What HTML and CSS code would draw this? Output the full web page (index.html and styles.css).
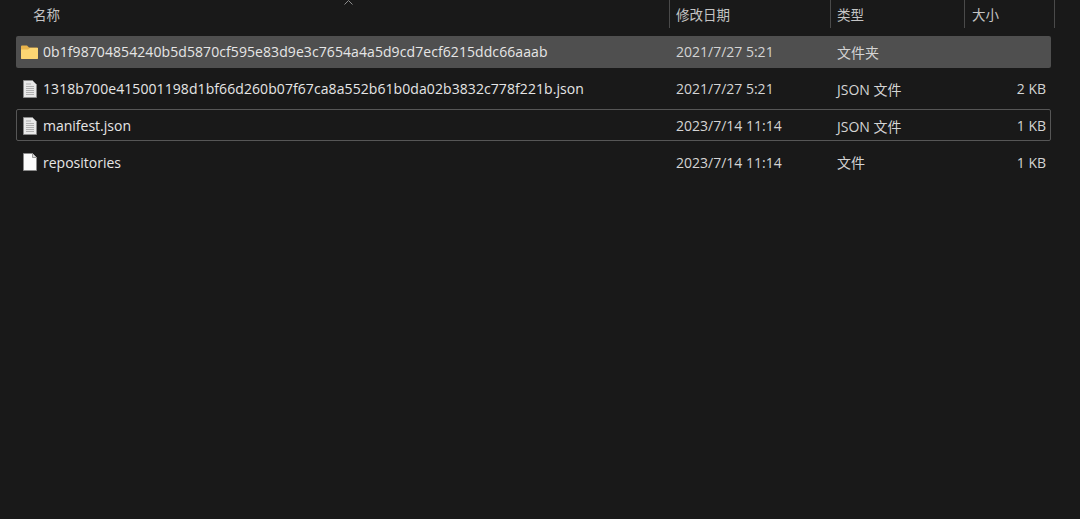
FILE: index.html
```html
<!DOCTYPE html>
<html lang="en">
<head>
    <meta charset="UTF-8">
    <meta name="viewport" content="width=device-width, initial-scale=1.0">
    <title>File list</title>
    <link rel="stylesheet" href="styles.css">
</head>
<body>
    <svg class="icon-defs" width="0" height="0">
        <symbol id="doc-lines" viewBox="0 0 14 18">
            <path d="M.5.5h9l4 4v13H.5z" fill="#e8e8e8" stroke="#8a8a8a"/>
            <path d="M3 4h5M3 6.500h8M3 8.500h8M3 10.500h8M3 12.500h8M3 14.500h8" stroke="#b0b0b0"/>
        </symbol>
        <symbol id="doc-blank" viewBox="0 0 14 18">
            <path d="M.5.5h9l4 4v13H.5z" fill="#fbfbfb" stroke="#8a8a8a"/>
            <path d="M9.500.5v4h4" fill="#d8d8d8" stroke="#9a9a9a"/>
        </symbol>
        <symbol id="folder" viewBox="0 0 17 14">
            <path d="M0 1.500Q0 .5 1 .5h5l2 2h8q1 0 1 1V13q0 1-1 1H1q-1 0-1-1z" fill="#e9b44c"/>
            <path d="M0 4.500h7l2-1.500h8v10q0 1-1 1H1q-1 0-1-1z" fill="#fcd673"/>
        </symbol>
    </svg>

    <div class="explorer">
        <div class="header">
            <div class="col-name head-cell">名称</div>
            <div class="col-date head-cell">修改日期</div>
            <div class="col-type head-cell">类型</div>
            <div class="col-size head-cell">大小</div>
            <svg class="sort-caret" width="9" height="5" viewBox="0 0 9 5"><path d="M.5 4.500l4-4 4 4" fill="none" stroke="#8c8c8c"/></svg>
        </div>

        <div class="rows">
            <div class="row selected">
                <div class="col-name name-cell">
                    <svg class="icon icon-folder"><use href="#folder"/></svg>
                    <span class="filename hash">0b1f98704854240b5d5870cf595e83d9e3c7654a4a5d9cd7ecf6215ddc66aaab</span>
                </div>
                <div class="col-date">2021/7/27 5:21</div>
                <div class="col-type">文件夹</div>
                <div class="col-size"></div>
            </div>
            <div class="row">
                <div class="col-name name-cell">
                    <svg class="icon"><use href="#doc-lines"/></svg>
                    <span class="filename hash">1318b700e415001198d1bf66d260b07f67ca8a552b61b0da02b3832c778f221b.json</span>
                </div>
                <div class="col-date">2021/7/27 5:21</div>
                <div class="col-type">JSON 文件</div>
                <div class="col-size">2 KB</div>
            </div>
            <div class="row focused">
                <div class="col-name name-cell">
                    <svg class="icon"><use href="#doc-lines"/></svg>
                    <span class="filename">manifest.json</span>
                </div>
                <div class="col-date">2023/7/14 11:14</div>
                <div class="col-type">JSON 文件</div>
                <div class="col-size">1 KB</div>
            </div>
            <div class="row">
                <div class="col-name name-cell">
                    <svg class="icon"><use href="#doc-blank"/></svg>
                    <span class="filename">repositories</span>
                </div>
                <div class="col-date">2023/7/14 11:14</div>
                <div class="col-type">文件</div>
                <div class="col-size">1 KB</div>
            </div>
        </div>
    </div>
</body>
</html>
```

FILE: styles.css
```css
* {
    margin: 0;
    padding: 0;
    box-sizing: border-box;
}

body {
    background-color: #191919;
    color: #d4d4d4;
    font-family: 'Open Sans', 'Noto Sans CJK SC', sans-serif;
    font-size: 14px;
    height: 519px;
    overflow: hidden;
}

.icon-defs {
    display: block;
    height: 0;
}

.explorer {
    padding-left: 16px;
}

.header, .row {
    display: grid;
    grid-template-columns: 653px 161px 134px 87px;
    width: 1035px;
    align-items: center;
}

.header {
    position: relative;
    height: 28px;
    color: #c4c4c4;
    margin-bottom: 8px;
    width: 1039px;
    grid-template-columns: 654px 161px 134px 90px;
    font-size: 13.5px;
}

.head-cell {
    height: 28px;
    line-height: 30px;
    border-right: 1px solid #4a4a4a;
    padding-left: 6px;
}

.header .col-name {
    padding-left: 17px;
}

.header .col-size {
    text-align: left;
    padding-left: 7px;
}

.sort-caret {
    position: absolute;
    left: 328px;
    top: 0;
}

.rows {
    display: flex;
    flex-direction: column;
    gap: 5.200px;
}

.row {
    height: 31.500px;
    border: 1px solid transparent;
    border-radius: 2px;
    padding-top: 1px;
}

.row.selected {
    background-color: #4f4f4f;
    padding-top: 0;
}

.row.focused {
    border-color: #565656;
}

.name-cell {
    display: flex;
    align-items: center;
    color: #e6e6e6;
}

.hash {
    letter-spacing: 0.08px;
}

.icon {
    width: 14px;
    height: 18px;
    margin-left: 6px;
    margin-right: 6px;
    flex-shrink: 0;
}

.icon-folder {
    width: 17px;
    height: 14px;
    margin-left: 4px;
    margin-right: 5px;
}

.col-date {
    padding-left: 6px;
}

.col-type {
    padding-left: 6px;
}

.col-size {
    text-align: right;
    padding-right: 6px;
}
```
